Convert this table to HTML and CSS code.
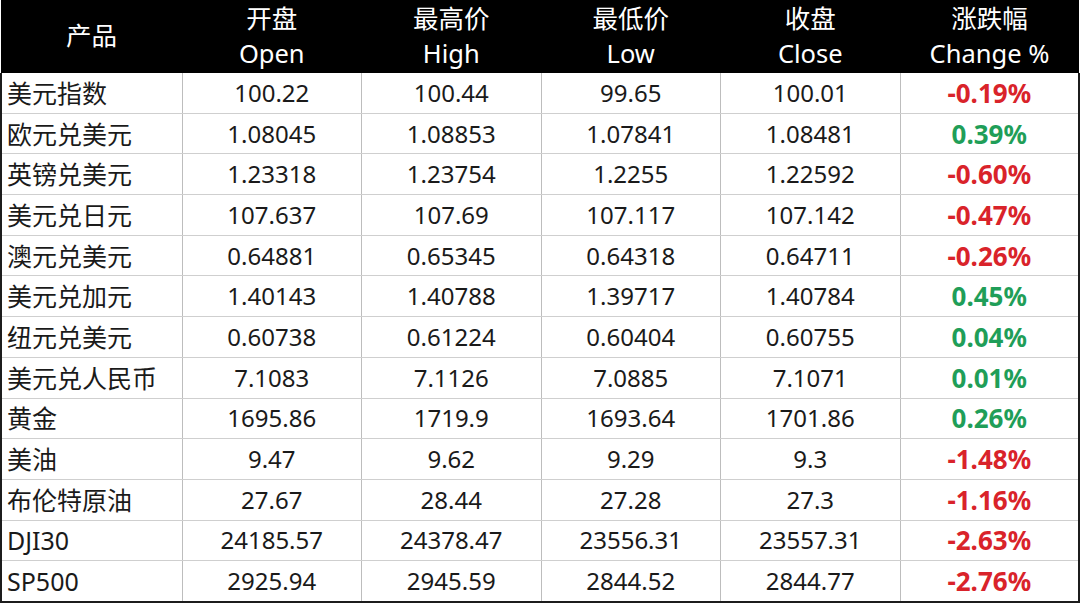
FILE: index.html
```html
<!DOCTYPE html>
<html lang="zh-CN">
<head>
<meta charset="utf-8">
<title>行情表</title>
<link rel="stylesheet" href="styles.css">
</head>
<body>
<table class="quotes">
  <colgroup>
    <col class="c-name"><col class="c-num"><col class="c-num"><col class="c-num"><col class="c-num"><col class="c-chg">
  </colgroup>
  <thead>
    <tr>
      <th>产品</th>
      <th>开盘<br>Open</th>
      <th>最高价<br>High</th>
      <th>最低价<br>Low</th>
      <th>收盘<br>Close</th>
      <th>涨跌幅<br>Change %</th>
    </tr>
  </thead>
  <tbody>
    <tr><td class="name">美元指数</td><td>100.22</td><td>100.44</td><td>99.65</td><td>100.01</td><td class="down">-0.19%</td></tr>
    <tr><td class="name">欧元兑美元</td><td>1.08045</td><td>1.08853</td><td>1.07841</td><td>1.08481</td><td class="up">0.39%</td></tr>
    <tr><td class="name">英镑兑美元</td><td>1.23318</td><td>1.23754</td><td>1.2255</td><td>1.22592</td><td class="down">-0.60%</td></tr>
    <tr><td class="name">美元兑日元</td><td>107.637</td><td>107.69</td><td>107.117</td><td>107.142</td><td class="down">-0.47%</td></tr>
    <tr><td class="name">澳元兑美元</td><td>0.64881</td><td>0.65345</td><td>0.64318</td><td>0.64711</td><td class="down">-0.26%</td></tr>
    <tr><td class="name">美元兑加元</td><td>1.40143</td><td>1.40788</td><td>1.39717</td><td>1.40784</td><td class="up">0.45%</td></tr>
    <tr><td class="name">纽元兑美元</td><td>0.60738</td><td>0.61224</td><td>0.60404</td><td>0.60755</td><td class="up">0.04%</td></tr>
    <tr><td class="name">美元兑人民币</td><td>7.1083</td><td>7.1126</td><td>7.0885</td><td>7.1071</td><td class="up">0.01%</td></tr>
    <tr><td class="name">黄金</td><td>1695.86</td><td>1719.9</td><td>1693.64</td><td>1701.86</td><td class="up">0.26%</td></tr>
    <tr><td class="name">美油</td><td>9.47</td><td>9.62</td><td>9.29</td><td>9.3</td><td class="down">-1.48%</td></tr>
    <tr><td class="name">布伦特原油</td><td>27.67</td><td>28.44</td><td>27.28</td><td>27.3</td><td class="down">-1.16%</td></tr>
    <tr><td class="name">DJI30</td><td>24185.57</td><td>24378.47</td><td>23556.31</td><td>23557.31</td><td class="down">-2.63%</td></tr>
    <tr><td class="name">SP500</td><td>2925.94</td><td>2945.59</td><td>2844.52</td><td>2844.77</td><td class="down">-2.76%</td></tr>
  </tbody>
</table>
</body>
</html>
```

FILE: styles.css
```css
html, body {
  margin: 0;
  padding: 0;
  background: #ffffff;
}

.quotes {
  width: 1079px;
  border-collapse: collapse;
  table-layout: fixed;
  font-family: "Noto Sans", "Noto Sans CJK SC", sans-serif;
  font-size: 24px;
  color: #1a1a1a;
  border: none;
}

.c-name { width: 181px; }
.c-num { width: 179.5px; }
.c-chg { width: 179px; }

.quotes thead tr {
  background: #000000;
}

.quotes th {
  height: 73px;
  box-sizing: border-box;
  color: #ffffff;
  font-size: 25.5px;
  font-weight: normal;
  line-height: 35px;
  padding: 0 0 2px 0;
  text-align: center;
  vertical-align: middle;
  border: none;
}

.quotes td {
  height: 39.7px;
  padding: 0;
  line-height: 30px;
  text-align: center;
  vertical-align: middle;
  border-left: 1px solid #bdbdbd;
  border-right: 1px solid #bdbdbd;
  border-top: 1px solid #cfcfcf;
  border-bottom: 1px solid #cfcfcf;
  white-space: nowrap;
}

.quotes td.name {
  font-size: 25px;
  text-align: left;
  padding-left: 5px;
  border-left: 2px solid #1c1c1c;
}

.quotes td:last-child {
  border-right: 2px solid #1c1c1c;
}

.quotes tbody tr:first-child td {
  border-top: none;
}

.quotes tbody tr:last-child td {
  border-bottom: 2px solid #1c1c1c;
}

.down {
  color: #d9232a;
  font-size: 26px;
  font-weight: bold;
}

.up {
  color: #1f9e58;
  font-size: 26px;
  font-weight: bold;
}
```
